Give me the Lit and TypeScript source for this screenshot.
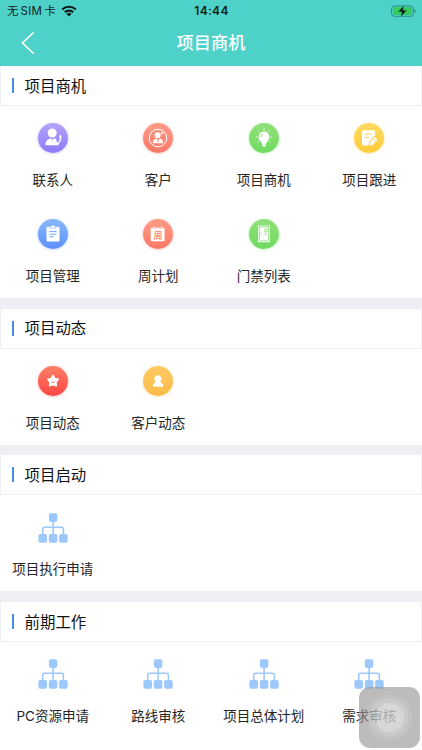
import { LitElement, html, svg, css } from "lit";
import { customElement, property } from "lit/decorators.js";

interface Entry {
  label: string;
  icon: string;
}

interface Group {
  title: string;
  entries: Entry[];
}

const groups: Group[] = [
  {
    title: "项目商机",
    entries: [
      { label: "联系人", icon: "contact" },
      { label: "客户", icon: "customer" },
      { label: "项目商机", icon: "bulb" },
      { label: "项目跟进", icon: "follow" },
      { label: "项目管理", icon: "manage" },
      { label: "周计划", icon: "week" },
      { label: "门禁列表", icon: "door" },
    ],
  },
  {
    title: "项目动态",
    entries: [
      { label: "项目动态", icon: "star" },
      { label: "客户动态", icon: "person" },
    ],
  },
  { title: "项目启动", entries: [{ label: "项目执行申请", icon: "tree" }] },
  {
    title: "前期工作",
    entries: [
      { label: "PC资源申请", icon: "tree" },
      { label: "路线审核", icon: "tree" },
      { label: "项目总体计划", icon: "tree" },
      { label: "需求审核", icon: "tree" },
    ],
  },
];

// Glyphs share a 30x30 box whose centre is the centre of the badge.
const glyphs: Record<string, unknown> = {
  contact: svg`
    <circle cx="14.2" cy="10" r="4.5" fill="#fff"/>
    <path d="M7.4 22.3C7.4 18.4 9.6 16.2 12.6 15.3L14.4 17L16.2 15.3C17 15.5 17.7 15.9 18.3 16.5C18.2 18.6 19.2 20.4 20.8 22.3Z" fill="#fff"/>
    <path d="M22.4 13.6C23 16.6 21.6 19.6 18.7 21" fill="none" stroke="#fff" stroke-width="1.4"/>
    <path d="M21 12.6l2-.7.7 2.3-1.8.7zM18 19.7l1.8-.5 1.2 2-1.8 1z" fill="#fff"/>`,
  customer: svg`
    <circle cx="15" cy="15" r="8.8" fill="none" stroke="#fff" stroke-width="1"/>
    <circle cx="14.6" cy="12.2" r="2.9" fill="#fff"/>
    <path d="M9.7 20.2C9.8 17.5 11.4 16 13.3 15.5L15 17.2L16.7 15.5C18.6 16 20.2 17.5 20.3 20.2Z" fill="#fff"/>
    <path d="M15 16.8v2.6" stroke="#ff8370" stroke-width=".8"/>
    <path d="M17.4 11.2l2.3-1.4M18.2 9.6l1.7.1-.5 1.7" fill="none" stroke="#fff" stroke-width=".9"/>`,
  bulb: svg`
    <path d="M15 8.6A5.6 5.6 0 0 0 11.5 18.3C12.6 19.3 12.8 20 12.9 21H17.1C17.2 20 17.4 19.3 18.5 18.3A5.6 5.6 0 0 0 15 8.6Z" fill="#fff"/>
    <path d="M13.1 21.2h3.8v1.3l-.8 1.1h-2.2l-.8-1.1z" fill="#fff"/>
    <path d="M12 14a3.4 3.4 0 0 1 2.6-3" fill="none" stroke="#7ddb69" stroke-width=".7"/>
    <path d="M15 5.3v2M9.2 8l1.4 1.3M20.8 8l-1.4 1.3M6.7 14h1.8M21.5 14h1.8M8.8 19.3l1.2-1M21.2 19.3l-1.2-1" stroke="#fff" stroke-width=".9"/>`,
  follow: svg`
    <path d="M9.5 7.2h10.1q1.5 0 1.5 1.5v3.6l-5.8 6.2-.8 4.1H9.5q-1.5 0-1.5-1.5V8.7q0-1.5 1.5-1.5z" fill="#fff"/>
    <path d="M10.6 11h7.4M10.6 14.4h4.2" stroke="#ffcf43" stroke-width="1"/>
    <path d="M20.7 13.7l3 3-5.2 5.5-2.8.3.1-3.2z" fill="#fff" stroke="#ffcf43" stroke-width=".4"/>
    <path d="M19.2 15.2l2.8 2.8" stroke="#ffcf43" stroke-width=".6"/>`,
  manage: svg`
    <path d="M9.4 7.7h2.3v1.5h6.6V7.7h2.3q.9 0 .9.9v12.9q0 .9-.9.9H9.4q-.9 0-.9-.9V8.6q0-.9.9-.9z" fill="#fff"/>
    <rect x="12.6" y="6.7" width="4.8" height="2" rx=".5" fill="#fff"/>
    <path d="M11.4 12.6h7.2M11.4 15.2h7.2M11.4 17.8h4.2" stroke="#6b9fff" stroke-width=".95"/>`,
  week: svg`
    <path d="M8.7 8.8h2.2v1.3h1.6V8.8h5v1.3h1.6V8.8h1.5q1 0 1 1v11.4q0 1-1 1H8.7q-1 0-1-1V9.8q0-1 1-1z" fill="#fff"/>
    <path d="M11.6 7.2v2.3M18.3 7.2v2.3" stroke="#fff" stroke-width="1.1"/>
    <text x="15" y="19.7" text-anchor="middle" font-size="9" font-weight="500" fill="#ff7c69">周</text>`,
  door: svg`
    <rect x="9.4" y="6.9" width="11.2" height="15.1" fill="none" stroke="#fff" stroke-width=".8"/>
    <path d="M10.7 8.2h8.6v13.1h-8.6z" fill="#fff"/>
    <path d="M8.8 22.8h12.4" stroke="#fff" stroke-width=".9"/>
    <circle cx="16.8" cy="11.4" r="1.5" fill="none" stroke="#7bdc66" stroke-width=".8"/>
    <path d="M16.8 12.8v3.3M16.8 15.4h-1.3M12.1 13.8v2" stroke="#7bdc66" stroke-width=".7"/>`,
  star: svg`
    <path d="M15 9.6l1.7 3 3.4.7-2.3 2.8.4 3.6-3.2-1.2-3.2 1.2.4-3.6-2.3-2.8 3.4-.7z" fill="#fff" stroke="#fff" stroke-width="1.8" stroke-linejoin="round"/>
    <path d="M13.3 15.8q1.7 1.2 3.4 0" fill="none" stroke="#fb554f" stroke-width=".9"/>`,
  person: svg`
    <path d="M15 9.2a3.5 3.5 0 0 0-2.3 6.2L12.3 16.4C10.7 17 9.8 18 9.8 19.6Q9.8 20.7 10.9 20.7H19.3Q20.4 20.7 20.4 19.6C20.4 18 19.4 17 17.7 16.4L17.3 15.4A3.5 3.5 0 0 0 15 9.2Z" fill="#fff"/>`,
  tree: svg`
    <g fill="#9dc8fb">
      <rect x="10.9" y="0.3" width="8.4" height="8.6" rx="1.8"/>
      <rect x=".4" y="21.1" width="8.6" height="8.6" rx="1.8"/>
      <rect x="10.8" y="21.1" width="8.6" height="8.6" rx="1.8"/>
      <rect x="21.1" y="21.1" width="8.6" height="8.6" rx="1.8"/>
    </g>
    <path d="M15.1 8v14M4.7 22v-5.8q0-2 2-2h16.7q2 0 2 2V22" fill="none" stroke="#9dc8fb" stroke-width="1.6"/>`,
};

@customElement("entry-icon")
class EntryIcon extends LitElement {
  @property() name = "";

  static styles = css`
    :host { display: block; width: 30px; height: 30px; }
    .badge { width: 30px; height: 30px; border-radius: 50%; }
    .glyph { display: block; width: 30px; height: 30px; font-family: "Noto Sans CJK SC", sans-serif; }
    .contact { background: linear-gradient(#b5a3fc, #8c7bf8); box-shadow: 0 0.5px 3px #8975fb70; }
    .customer, .week { background: linear-gradient(#ff9c88, #fd7766); box-shadow: 0 0.5px 3px #fd715f70; }
    .bulb, .door { background: linear-gradient(#91e178, #70d961); box-shadow: 0 0.5px 3px #68d65a70; }
    .follow { background: linear-gradient(#ffdb62, #ffcb3a); box-shadow: 0 0.5px 3px #ffc82f70; }
    .manage { background: linear-gradient(#89b8ff, #5b8ff9); box-shadow: 0 0.5px 3px #5389fa70; }
    .star { background: linear-gradient(#ff8066, #fa4645); box-shadow: 0 0.5px 3px #fa403f70; }
    .person { background: linear-gradient(#ffc961, #f9bc4a); box-shadow: 0 0.5px 3px #f9b94470; }
  `;

  render() {
    return html`<div class="badge ${this.name}">
      <svg class="glyph" viewBox="0 0 30 30">${glyphs[this.name]}</svg>
    </div>`;
  }
}

@customElement("entry-group")
class EntryGroup extends LitElement {
  @property({ attribute: false }) group!: Group;

  static styles = css`
    :host { display: block; background: #fff; }
    .heading {
      box-sizing: border-box;
      height: 40px;
      display: flex;
      align-items: center;
      gap: 10.6px;
      padding-left: 11px;
      border: solid #eeeef5;
      border-width: 0 1px 1px;
    }
    .bar { width: 2px; height: 15px; background: #4b89e8; }
    .title { font-size: 15.4px; line-height: 22px; padding-bottom: 1.4px; color: #111; }
    .grid { display: grid; grid-template-columns: repeat(4, 1fr); grid-auto-rows: 96px; }
    .entry {
      display: flex;
      flex-direction: column;
      align-items: center;
      gap: 16.6px;
      padding-top: 17.4px;
      white-space: nowrap;
    }
    .label {
      font-family: Inter, "Noto Sans CJK SC", sans-serif;
      font-size: 13.5px;
      line-height: 20px;
      color: #262626;
    }
  `;

  render() {
    return html`
      <div class="heading"><i class="bar"></i><span class="title">${this.group.title}</span></div>
      <div class="grid">
        ${this.group.entries.map(
          (e) => html`<div class="entry">
            <entry-icon name=${e.icon}></entry-icon>
            <span class="label">${e.label}</span>
          </div>`
        )}
      </div>
    `;
  }
}

@customElement("app-root")
class AppRoot extends LitElement {
  static styles = css`
    :host {
      display: block;
      position: relative;
      height: 750px;
      overflow: hidden;
      background: #fff;
      font-family: "Noto Sans CJK SC", sans-serif;
    }
    .header { height: 66px; background: #4ed1c9; }
    .status {
      display: grid;
      grid-template-columns: 1fr auto 1fr;
      align-items: center;
      height: 21px;
      padding: 0 6px 0 7px;
      color: #142522;
    }
    .carrier { display: flex; align-items: center; gap: 5px; font-size: 11.5px; line-height: 20px; }
    .sim { font-family: Inter, sans-serif; font-size: 11.5px; letter-spacing: 0.3px; padding: 0 2px; }
    .clock { font: 600 12px/20px Inter, sans-serif; letter-spacing: 0.3px; color: #101c1a; }
    .wifi { width: 16px; height: 12px; }
    .battery { width: 25px; height: 12px; justify-self: end; }
    .nav { display: grid; grid-template-columns: 60px 1fr 60px; align-items: center; height: 44px; color: #fff; }
    .back { width: 14px; height: 24px; margin-left: 21px; }
    .name { text-align: center; font-size: 17.2px; font-weight: 500; line-height: 26px; padding-bottom: 2px; }
    .groups { display: flex; flex-direction: column; gap: 10.67px; background: #eeeef5; }
    .assist {
      position: absolute;
      left: 359px;
      top: 687px;
      width: 61px;
      height: 61px;
      border-radius: 11px;
      background: rgba(150, 150, 150, 0.64);
    }
    .rings { display: block; width: 61px; height: 61px; }
  `;

  render() {
    return html`
      <div class="header">
        <div class="status">
          <div class="carrier">
            <span>无<span class="sim">SIM</span>卡</span>
            <svg class="wifi" viewBox="0 0 16 12">
              <g fill="none" stroke="#101c1a" stroke-width="2.1">
                <path d="M1.2 4.6a9.7 9.7 0 0 1 13.6 0"/>
                <path d="M3.8 7.3a6 6 0 0 1 8.4 0"/>
              </g>
              <path d="M8 11.5L5.5 9a3.6 3.6 0 0 1 5 0z" fill="#101c1a"/>
            </svg>
          </div>
          <span class="clock">14:44</span>
          <svg class="battery" viewBox="0 0 25 12">
            <rect x=".6" y=".9" width="21.8" height="10.4" rx="3" fill="none" stroke="#2b827b" stroke-width=".9"/>
            <rect x="2" y="2.3" width="19" height="7.6" rx="1.7" fill="#35cb5d"/>
            <path d="M23.5 4.3v3.6q1.2-.6 1.2-1.8t-1.2-1.8z" fill="#2b827b"/>
            <path d="M12.8.5L7.2 6.8h3.7L10 11.7l5.6-6.5h-3.7z" fill="#081512" stroke="#45bf94" stroke-width=".3"/>
          </svg>
        </div>
        <div class="nav">
          <svg class="back" viewBox="0 0 14 24">
            <path d="M12.5 1.5L1.5 12l11 10.5" fill="none" stroke="#fff" stroke-width="1.7"/>
          </svg>
          <span class="name">项目商机</span>
        </div>
      </div>
      <div class="groups">
        ${groups.map((g) => html`<entry-group .group=${g}></entry-group>`)}
      </div>
      <div class="assist">
        <svg class="rings" viewBox="0 0 61 61">
          <g fill="#fff">
            <circle cx="30.5" cy="30.5" r="23" fill-opacity=".1"/>
            <circle cx="30.5" cy="30.5" r="19" fill-opacity=".14"/>
            <circle cx="30.5" cy="30.5" r="14.5" fill-opacity=".25"/>
          </g>
        </svg>
      </div>
    `;
  }
}
